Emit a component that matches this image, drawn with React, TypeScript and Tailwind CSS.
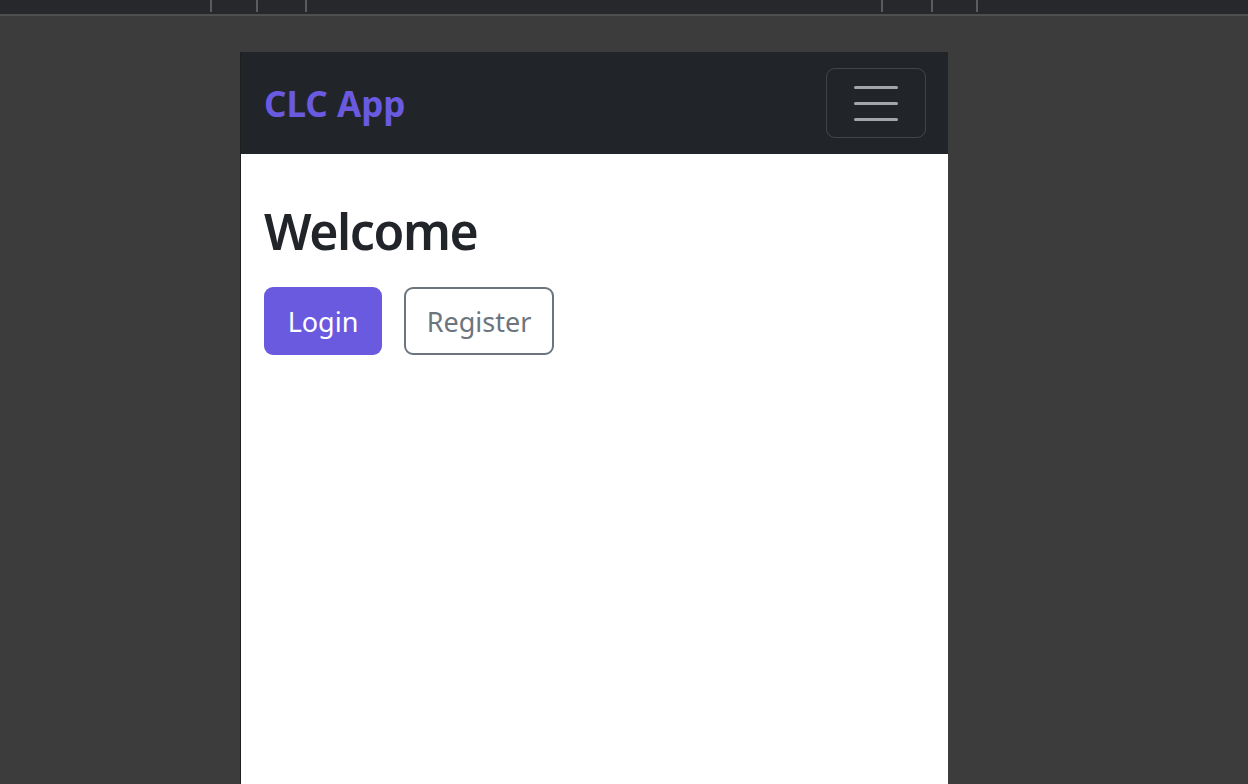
const ticks = [210, 256, 305, 881, 931, 976]

function TopStrip() {
  return (
    <div className="relative h-[16px] bg-[#26282c] border-b-2 border-[#4f4f4f]">
      {ticks.map((x) => (
        <span key={x} className="absolute top-0 h-[12px] w-[2px] bg-[#5c5c5c]" style={{ left: x }} />
      ))}
    </div>
  )
}

function Toggler() {
  return (
    <button className="w-[100px] h-[70px] rounded-[9px] border-[1.5px] border-white/15 flex flex-col items-center justify-center gap-[13px]">
      <span className="block w-[44px] h-[3px] rounded-full bg-[#a3a5a8]" />
      <span className="block w-[44px] h-[3px] rounded-full bg-[#a3a5a8]" />
      <span className="block w-[44px] h-[3px] rounded-full bg-[#a3a5a8]" />
    </button>
  )
}

export default function App() {
  return (
    <div className="min-h-screen bg-[#3c3c3c] font-['Noto_Sans',sans-serif]">
      <TopStrip />
      <div className="ml-[240px] mt-[36px] w-[708px] h-[732px] bg-white border-l border-[#1f1f1f]">
        <nav className="h-[102px] bg-[#212529] flex items-center justify-between pl-[23px] pr-[22px]">
          <span className="text-[35px] font-bold text-[#6a5ae0] tracking-[0px] leading-none">CLC App</span>
          <Toggler />
        </nav>
        <main className="px-[23px] pt-[47px]">
          <h1 className="text-[50px] font-semibold text-[#212529] leading-[1.2] tracking-[-1.4px]">Welcome</h1>
          <div className="flex gap-[22px] mt-[26px]">
            <button className="w-[118px] h-[68px] rounded-[9px] bg-[#6a5ae0] text-white text-[27px] leading-none">
              Login
            </button>
            <button className="w-[150px] h-[68px] rounded-[9px] border-2 border-[#6c757d] text-[#6c757d] text-[27px] leading-none">
              Register
            </button>
          </div>
        </main>
      </div>
    </div>
  )
}
